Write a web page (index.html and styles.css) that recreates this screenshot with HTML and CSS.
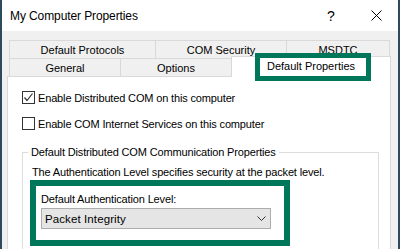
FILE: index.html
```html
<!DOCTYPE html>
<html>
<head>
<meta charset="utf-8">
<link rel="stylesheet" href="styles.css">
</head>
<body>
<div class="window">
  <div class="titlebar">
    <span class="title">My Computer Properties</span>
    <span class="help">?</span>
    <span class="close"><svg width="11" height="11" viewBox="0 0 11 11"><path d="M0.5 0.5 L10.5 10.5 M10.5 0.5 L0.5 10.5" stroke="#000" stroke-width="1" fill="none"/></svg></span>
  </div>
  <div class="client">
    <div class="tabrow">
      <div class="tab t-protocols">Default Protocols</div>
      <div class="tab t-security">COM Security</div>
      <div class="tab t-msdtc">MSDTC</div>
    </div>
    <div class="tabrow">
      <div class="tab t-general">General</div>
      <div class="tab t-options">Options</div>
      <div class="tab t-selected">Default Properties</div>
    </div>
    <div class="panel">
      <div class="check">
        <span class="box"><svg width="11" height="11" viewBox="0 0 11 11"><path d="M1.5 5.5 L4 8.5 L9.5 1.5" stroke="#333" stroke-width="1.2" fill="none"/></svg></span>
        <span>Enable Distributed COM on this computer</span>
      </div>
      <div class="check second">
        <span class="box"></span>
        <span>Enable COM Internet Services on this computer</span>
      </div>
      <fieldset class="group">
        <legend>Default Distributed COM Communication Properties</legend>
        <div class="desc">The Authentication Level specifies security at the packet level.</div>
        <div class="label">Default Authentication Level:</div>
        <div class="select">
          <span class="value">Packet Integrity</span>
          <svg width="9" height="5" viewBox="0 0 9 5"><path d="M0.5 0.5 L4.5 4.5 L8.5 0.5" stroke="#333" stroke-width="1" fill="none"/></svg>
        </div>
      </fieldset>
    </div>
  </div>
</div>
<div class="hl hl-tab"></div>
<div class="hl hl-auth"></div>
</body>
</html>
```

FILE: styles.css
```css
* { box-sizing: border-box; }
html, body { margin: 0; padding: 0; }
body {
  width: 400px;
  height: 249px;
  overflow: hidden;
  position: relative;
  font-family: "Liberation Sans", Arial, sans-serif;
  font-size: 11px;
  color: #000;
  background: #f0f0f0;
}
.window {
  width: 400px;
  height: 249px;
  border-left: 2px solid #2b4b5a;
  border-right: 2px solid #2b4b5a;
  background: #f0f0f0;
  display: flex;
  flex-direction: column;
  overflow: hidden;
}
.titlebar {
  height: 31px;
  flex: none;
  background: #fff;
  display: flex;
  align-items: center;
  padding-left: 8px;
}
.title { flex: 1; font-size: 12px; letter-spacing: -0.1px; }
.help {
  width: 20px;
  text-align: center;
  font-size: 14px;
  margin-right: 14px;
}
.close {
  width: 43px;
  display: flex;
  justify-content: center;
  align-items: center;
}
.close svg { display: block; }
.client {
  flex: 1;
  display: flex;
  flex-direction: column;
  padding-top: 9px;
}
.tabrow {
  display: flex;
  height: 18px;
  margin-left: 7px;
  flex: none;
}
.tab {
  height: 18px;
  border-top: 1px solid #d9d9d9;
  border-left: 1px solid #d9d9d9;
  display: flex;
  align-items: center;
  justify-content: center;
  background: #f0f0f0;
  white-space: nowrap;
}
.t-protocols { width: 146px; }
.t-security { width: 131px; }
.t-msdtc { width: 104px; border-right: 1px solid #d9d9d9; }
.t-general { width: 111px; }
.t-options { width: 111px; }
.t-selected {
  width: 160px;
  height: 21px;
  margin-top: -2px;
  border-right: 1px solid #d9d9d9;
  background: #fff;
  position: relative;
  z-index: 2;
  padding-bottom: 2px;
}
.panel {
  flex: 1;
  margin-left: 5px;
  width: 384px;
  background: #fff;
  border: 1px solid #d9d9d9;
  padding: 14px 0 0 14px;
  letter-spacing: -0.15px;
}
.check {
  display: flex;
  align-items: center;
  height: 13px;
  white-space: nowrap;
}
.check.second { margin-top: 13px; }
.box {
  width: 13px;
  height: 13px;
  border: 1px solid #333;
  background: #fff;
  margin-right: 3px;
  flex: none;
}
.box svg { display: block; }
.group {
  margin: 15px 0 0 0;
  width: 357px;
  border: 1px solid #dcdcdc;
  padding: 7px 0 20px 9px;
}
.group legend {
  line-height: 14px;
  padding: 0 3px;
  margin-left: -4px;
  white-space: nowrap;
}
.desc { line-height: 13px; white-space: nowrap; }
.label {
  line-height: 13px;
  margin: 14px 0 0 9px;
  white-space: nowrap;
}
.select {
  margin: 2px 0 0 9px;
  width: 230px;
  height: 21px;
  background: #e5e5e5;
  border: 1px solid #adadad;
  display: flex;
  align-items: center;
  justify-content: space-between;
  padding: 0 4px 0 3px;
}
.select .value { letter-spacing: 0.1px; font-size: 11.5px; }
.select svg { display: block; }
.hl {
  position: absolute;
  border-style: solid;
  border-color: #00775a;
  z-index: 5;
}
.hl-tab { left: 255px; top: 53px; width: 116px; height: 28px; border-width: 5px; }
.hl-auth { left: 30px; top: 180px; width: 260px; height: 66px; border-width: 6px; }
```
